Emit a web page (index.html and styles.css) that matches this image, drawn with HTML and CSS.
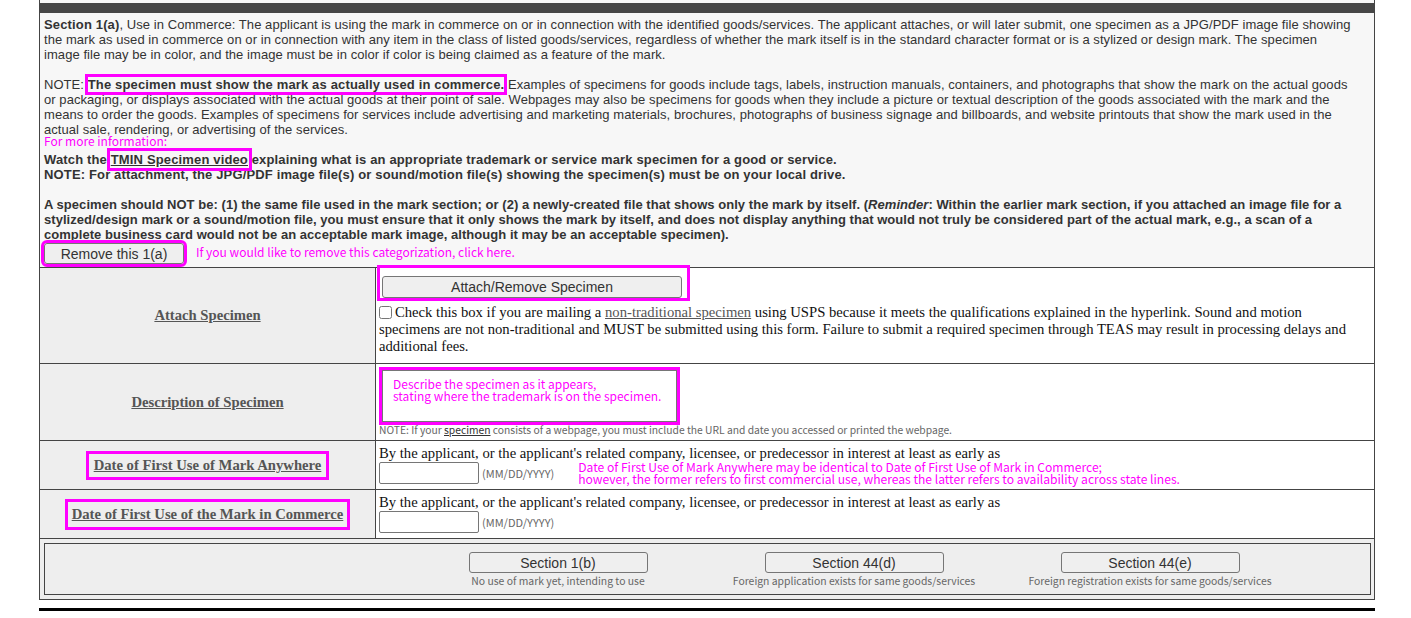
FILE: index.html
```html
<!DOCTYPE html>
<html lang="en">
<head>
<meta charset="utf-8">
<title>Section 1(a) Use in Commerce</title>
<link rel="stylesheet" href="styles.css">
</head>
<body>
<div class="frame">
  <div class="topstrip"></div>
  <div class="darkbar"></div>
  <div class="intro">
    <p><b>Section 1(a)</b>, Use in Commerce: The applicant is using the mark in commerce on or in connection with the identified goods/services. The applicant attaches, or will later submit, one specimen as a JPG/PDF image file showing<br>the mark as used in commerce on or in connection with any item in the class of listed goods/services, regardless of whether the mark itself is in the standard character format or is a stylized or design mark. The specimen<br>image file may be in color, and the image must be in color if color is being claimed as a feature of the mark.</p>
    <p class="tight">NOTE: <b class="hl">The specimen must show the mark as actually used in commerce.</b> Examples of specimens for goods include tags, labels, instruction manuals, containers, and photographs that show the mark on the actual goods<br>or packaging, or displays associated with the actual goods at their point of sale. Webpages may also be specimens for goods when they include a picture or textual description of the goods associated with the mark and the<br>means to order the goods. Examples of specimens for services include advertising and marketing materials, brochures, photographs of business signage and billboards, and website printouts that show the mark used in the<br>actual sale, rendering, or advertising of the services.</p>
    <div class="anno more">For more information:</div>
    <p class="strong">Watch the <a class="link hl hl-video">TMIN Specimen video</a> explaining what is an appropriate trademark or service mark specimen for a good or service.<br>NOTE: For attachment, the JPG/PDF image file(s) or sound/motion file(s) showing the specimen(s) must be on your local drive.</p>
    <p class="strong last">A specimen should NOT be: (1) the same file used in the mark section; or (2) a newly-created file that shows only the mark by itself. (<i>Reminder</i>: Within the earlier mark section, if you attached an image file for a<br>stylized/design mark or a sound/motion file, you must ensure that it only shows the mark by itself, and does not display anything that would not truly be considered part of the actual mark, e.g., a scan of a<br>complete business card would not be an acceptable mark image, although it may be an acceptable specimen).</p>
    <div class="remove-row">
      <button class="btn btn-remove" type="button">Remove this 1(a)</button>
      <span class="anno remove-anno">If you would like to remove this categorization, click here.</span>
    </div>
  </div>

  <div class="row r-attach">
    <div class="label"><a class="lbl">Attach Specimen</a></div>
    <div class="cell cell-attach">
      <div class="attach-box"><button class="btn btn-attach" type="button">Attach/Remove Specimen</button></div>
      <p class="check"><input type="checkbox" class="cb">Check this box if you are mailing a <a class="ulink">non-traditional specimen</a> using USPS because it meets the qualifications explained in the hyperlink. Sound and motion specimens are not non-traditional and MUST be submitted using this form. Failure to submit a required specimen through TEAS may result in processing delays and additional fees.</p>
    </div>
  </div>

  <div class="row r-desc">
    <div class="label"><a class="lbl">Description of Specimen</a></div>
    <div class="cell">
      <div class="desc-box"><div class="desc-inner anno">Describe the specimen as it appears,<br>stating where the trademark is on the specimen.</div></div>
      <div class="note">NOTE: If your <a class="note-link">specimen</a> consists of a webpage, you must include the URL and date you accessed or printed the webpage.</div>
    </div>
  </div>

  <div class="row r-date">
    <div class="label"><a class="lbl lblbox">Date of First Use of Mark Anywhere</a></div>
    <div class="cell date-cell">
      <div class="line">By the applicant, or the applicant's related company, licensee, or predecessor in interest at least as early as</div>
      <div class="date-line">
        <input type="text" class="date">
        <span class="fmt">(MM/DD/YYYY)</span>
        <span class="anno date-anno">Date of First Use of Mark Anywhere may be identical to Date of First Use of Mark in Commerce;<br>however, the former refers to first commercial use, whereas the latter refers to availability across state lines.</span>
      </div>
    </div>
  </div>

  <div class="row r-date">
    <div class="label"><a class="lbl lblbox lblbox2">Date of First Use of the Mark in Commerce</a></div>
    <div class="cell date-cell">
      <div class="line">By the applicant, or the applicant's related company, licensee, or predecessor in interest at least as early as</div>
      <div class="date-line">
        <input type="text" class="date">
        <span class="fmt">(MM/DD/YYYY)</span>
      </div>
    </div>
  </div>

  <div class="row5">
    <div class="alt-box">
      <div class="alt"><button class="btn btn-alt" type="button">Section 1(b)</button><span class="cap">No use of mark yet, intending to use</span></div>
      <div class="alt"><button class="btn btn-alt" type="button">Section 44(d)</button><span class="cap">Foreign application exists for same goods/services</span></div>
      <div class="alt"><button class="btn btn-alt" type="button">Section 44(e)</button><span class="cap">Foreign registration exists for same goods/services</span></div>
    </div>
  </div>
</div>
<div class="rule"></div>
</body>
</html>
```

FILE: styles.css
```css
* { box-sizing: border-box; }

body {
  margin: 0;
  background: #ffffff;
  font-family: "Liberation Sans", Arial, sans-serif;
}

.frame {
  margin-left: 39px;
  width: 1336px;
  border-left: 1px solid #444444;
  border-right: 1px solid #444444;
  border-bottom: 1px solid #444444;
}

.topstrip { height: 3px; background: #f7f7f7; }
.darkbar { height: 10px; background: #464646; }

.intro {
  background: #f7f7f7;
  padding: 4px 2px 3px 4px;
  font-size: 13px;
  line-height: 15px;
  color: #333333;
  letter-spacing: 0.06px;
  white-space: nowrap;
}
.intro b, .intro .strong { letter-spacing: 0.15px; }
.intro .strong.last { letter-spacing: 0.04px; }
.intro p { margin: 0 0 15px; }
.intro p.tight { margin-bottom: 0; }
.intro p.last { margin-bottom: 1px; }
.intro .strong { font-weight: bold; }

.link { color: #333333; text-decoration: underline; }

.hl { outline: 3px solid #ff00ff; outline-offset: 0; }
.hl-video { outline-offset: 1px; }

.anno {
  font-family: "Noto Sans CJK JP", "Noto Sans", sans-serif;
  color: #ff00ff;
  letter-spacing: 0;
}
.more {
  font-size: 12px;
  line-height: 15px;
  height: 15px;
  margin-top: -4px;
  margin-bottom: 4px;
}

.btn {
  font-family: "Liberation Sans", Arial, sans-serif;
  font-size: 14px;
  color: #333333;
  background: #efefef;
  border: 1px solid #767676;
  border-radius: 3px;
  padding: 0;
  margin: 0;
  letter-spacing: 0;
}

.remove-row { display: flex; align-items: center; }
.btn-remove {
  width: 140px;
  height: 21px;
  outline: 3px solid #ff00ff;
}
.remove-anno { font-size: 12px; line-height: 15px; margin-left: 12px; padding-bottom: 4px; }

.row {
  display: grid;
  grid-template-columns: 336px 1fr;
  border-top: 1px solid #444444;
}
.r-attach { height: 96px; }
.r-desc { height: 77px; }
.r-date { height: 49px; }

.label {
  background: #eeeeee;
  border-right: 1px solid #444444;
  display: flex;
  align-items: center;
  justify-content: center;
}
.lbl {
  font-family: "Liberation Serif", "Times New Roman", serif;
  font-weight: bold;
  font-size: 11pt;
  line-height: 17px;
  color: #555555;
  text-decoration: underline;
}
.lblbox {
  border: 3px solid #ff00ff;
  padding: 3px 5px;
}
.lblbox2 { padding: 4px 4px; }

.cell {
  background: #ffffff;
  padding: 0 4px 0 3px;
  font-family: "Liberation Serif", "Times New Roman", serif;
  font-size: 11pt;
  line-height: 17px;
  color: #111111;
}
.cell-attach { padding-right: 20px; }

.attach-box {
  width: fit-content;
  border: 3px solid #ff00ff;
  padding: 8px 5px 0 2px;
  margin: -3px 0 0 -2px;
}
.btn-attach { width: 300px; height: 22px; display: block; }

.check { margin: 3px 0 0; }
.cb {
  width: 13px;
  height: 13px;
  margin: 0 3px 0 0;
  vertical-align: -2px;
}
.ulink { color: #555555; text-decoration: underline; }

.desc-box {
  width: 301px;
  height: 58px;
  border: 3px solid #ff00ff;
  margin-top: 3px;
}
.desc-inner {
  height: 100%;
  border: 1px solid #767676;
  padding: 7px 10px;
  font-size: 12px;
  line-height: 12px;
  white-space: nowrap;
}
.note {
  font-family: "Noto Sans CJK JP", "Noto Sans", sans-serif;
  font-size: 10.3px;
  line-height: 12px;
  color: #666666;
  margin-top: -1px;
}
.note-link { color: #333333; text-decoration: underline; }

.date-cell { padding-top: 4px; }
.date-line { display: flex; align-items: flex-start; }
.date {
  width: 100px;
  height: 22px;
  border: 1px solid #767676;
  border-radius: 2px;
  margin: 0;
  background: #ffffff;
}
.fmt {
  font-family: "Noto Sans CJK JP", "Noto Sans", sans-serif;
  font-size: 11px;
  line-height: 13px;
  color: #666666;
  margin: 5px 0 0 3px;
}
.date-anno {
  margin: -1px 0 0 24px;
  font-size: 12.1px;
  line-height: 12px;
  white-space: nowrap;
}

.row5 {
  border-top: 1px solid #444444;
  background: #eeeeee;
  padding: 4px 3px 4px 4px;
  height: 61px;
}
.alt-box {
  height: 52px;
  border: 1px solid #444444;
  background: #eeeeee;
  display: grid;
  grid-template-columns: repeat(3, 296px);
  padding: 8px 0 0 365px;
}
.alt { display: flex; flex-direction: column; align-items: center; }
.btn-alt { width: 179px; height: 21px; }
.cap {
  font-family: "Noto Sans CJK JP", "Noto Sans", sans-serif;
  font-size: 10.4px;
  line-height: 13px;
  color: #666666;
  margin-top: 1px;
}

.rule {
  margin: 8px 0 0 39px;
  width: 1336px;
  height: 3px;
  background: #000000;
}
```
